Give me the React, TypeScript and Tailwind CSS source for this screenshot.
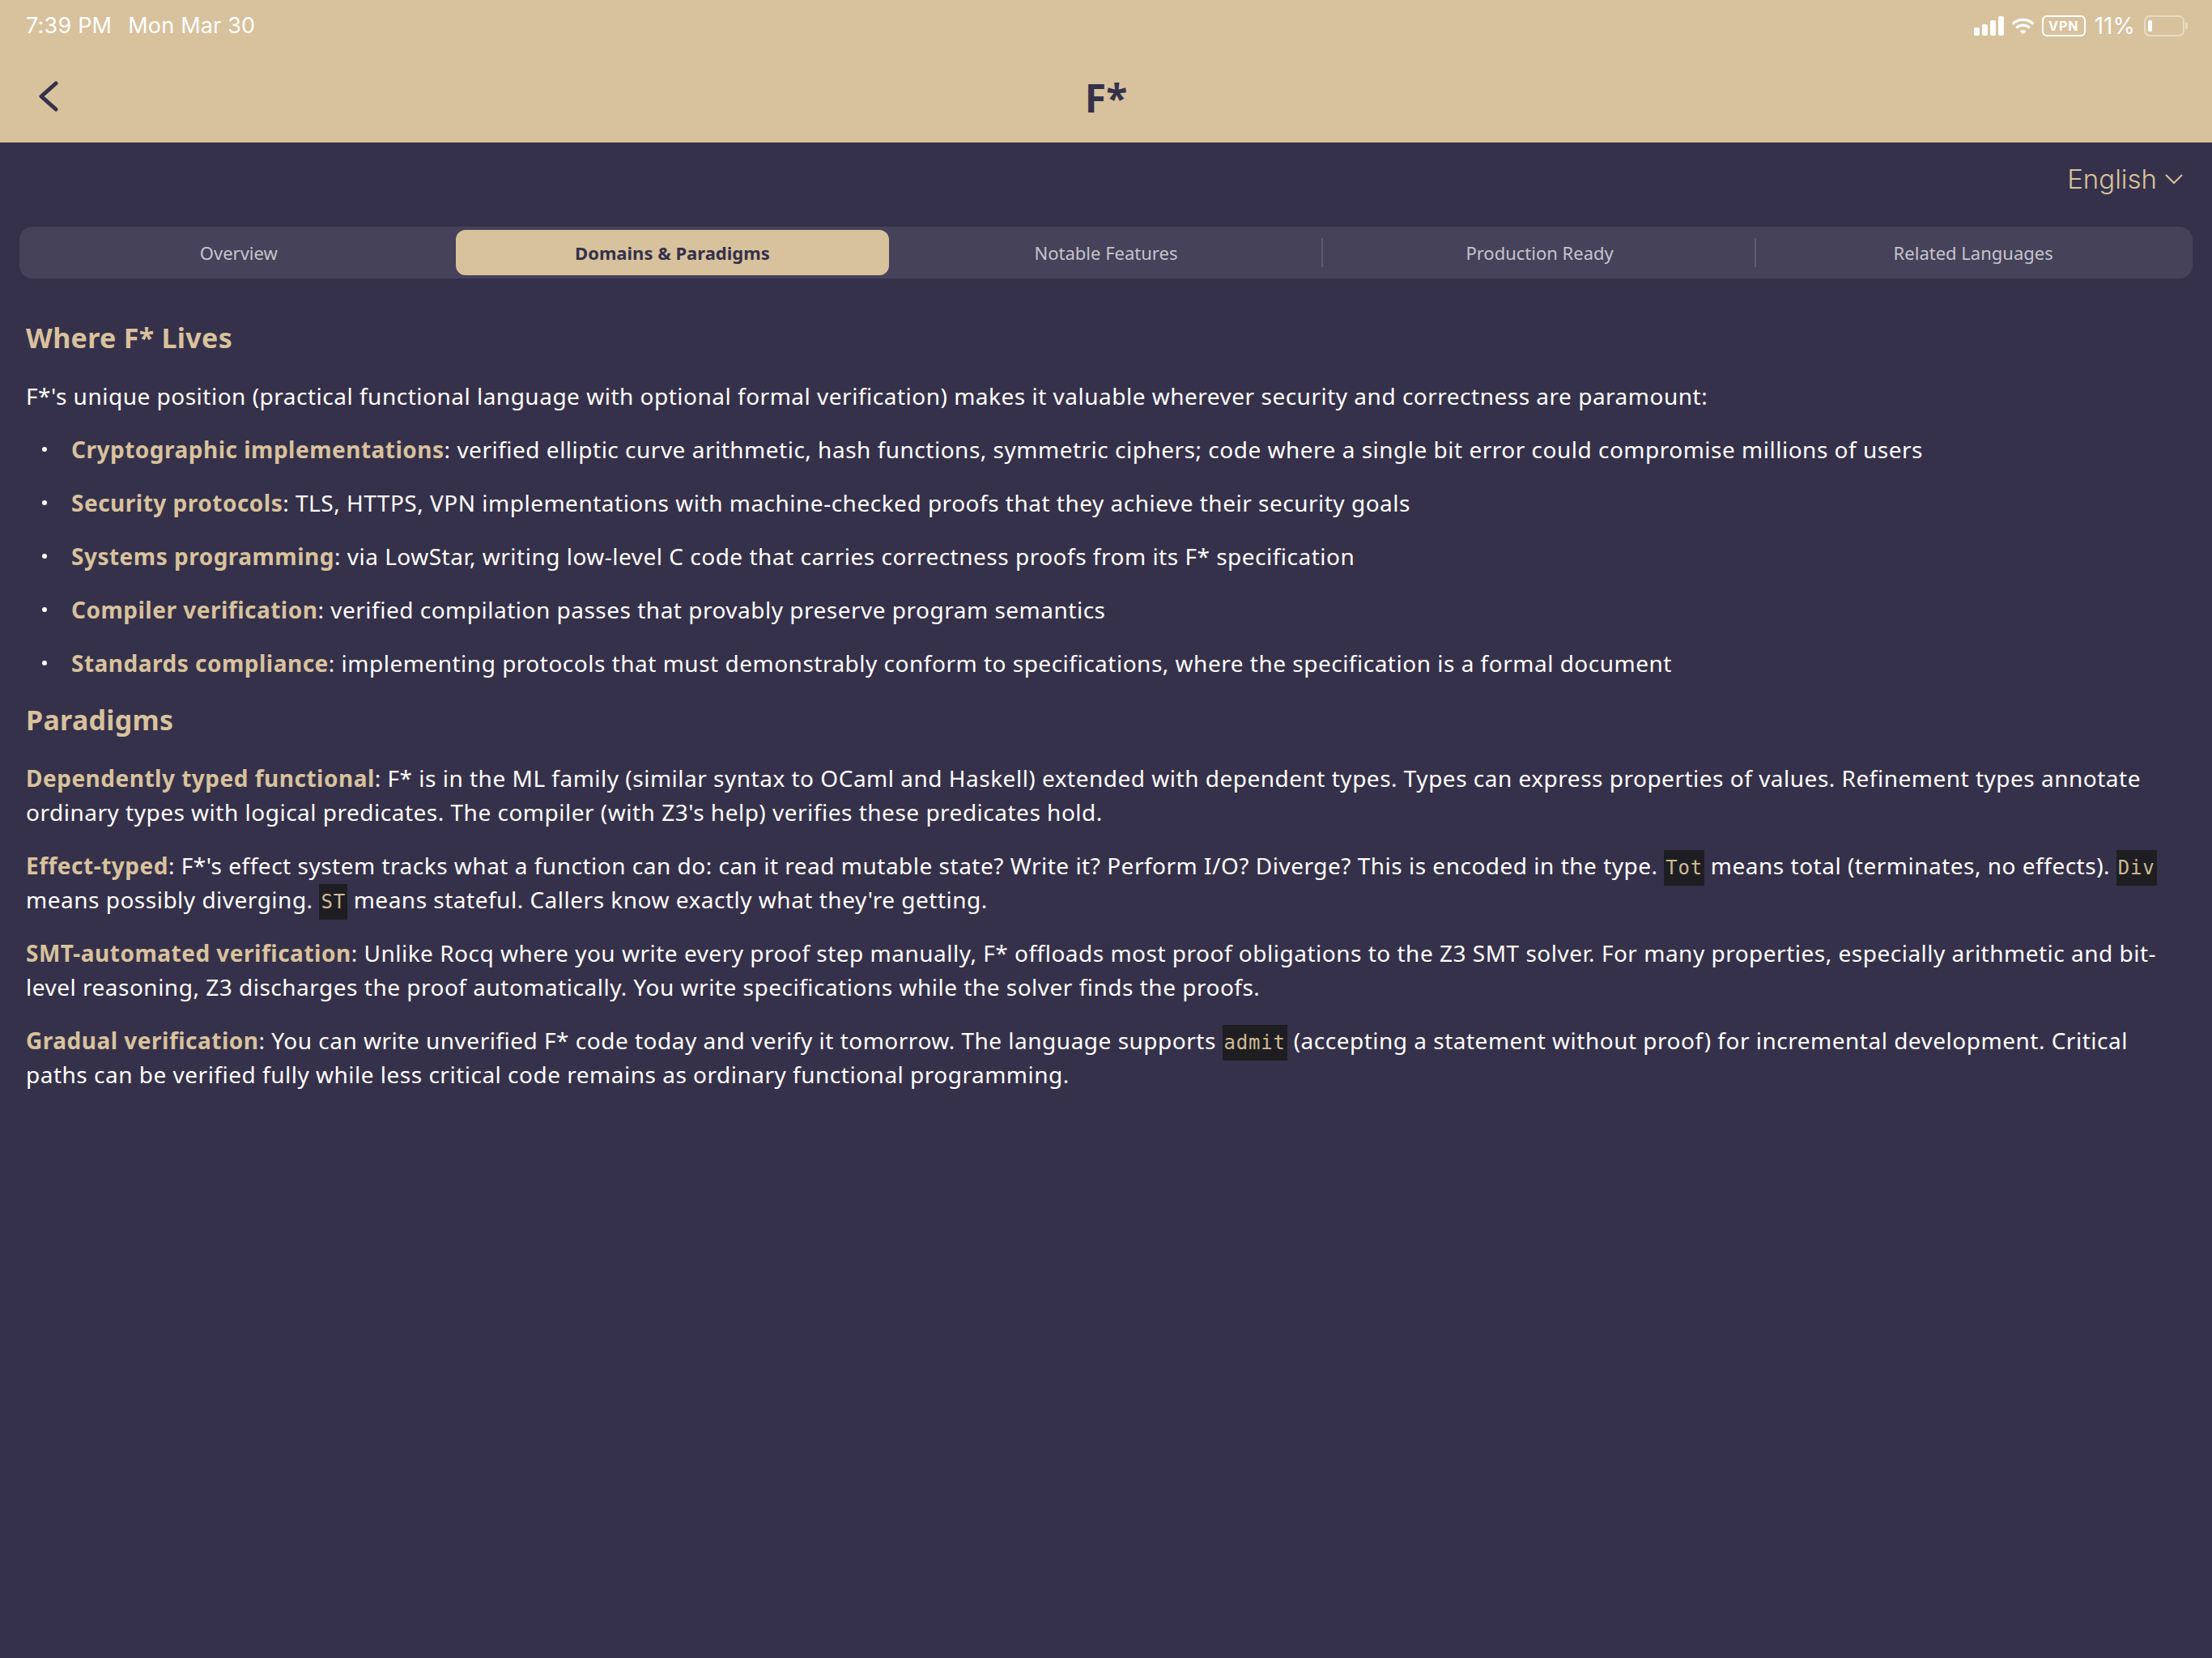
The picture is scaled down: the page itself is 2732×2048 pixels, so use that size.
const tabs = ["Overview", "Domains & Paradigms", "Notable Features", "Production Ready", "Related Languages"];

function B({ children }: { children: React.ReactNode }) {
  return <strong className="font-bold text-[#d8c29d]">{children}</strong>;
}

function C({ children }: { children: React.ReactNode }) {
  return (
    <code className="bg-[#1e1e22] px-[2px] py-[8px] font-['DejaVu_Sans_Mono',monospace] text-[24px] leading-none tracking-[0.8px] text-[#cfba96]">
      {children}
    </code>
  );
}

function StatusBar() {
  return (
    <div className="flex h-[64px] items-center justify-between pl-[32px] pr-[30px] font-['Inter',sans-serif] text-[27px] tracking-normal text-white">
      <div className="flex gap-[20px] tracking-[0.2px]">
        <span>7:39 PM</span>
        <span>Mon Mar 30</span>
      </div>
      <div className="flex items-center">
        <svg width="37" height="24" viewBox="0 0 37 24" fill="white">
          <rect x="0" y="14" width="7" height="10" rx="2" />
          <rect x="10" y="10" width="7" height="14" rx="2" />
          <rect x="20" y="5" width="7" height="19" rx="2" />
          <rect x="30" y="0" width="7" height="24" rx="2" />
        </svg>
        <svg className="ml-[9px]" width="29" height="21" viewBox="0 0 30 22" fill="none" stroke="white" strokeWidth="3.4">
          <path d="M1.5 8 C9 0.5 21 0.5 28.5 8" />
          <path d="M6.5 13 C11 8.5 19 8.5 23.5 13" />
          <path d="M11 17.5 L15 21 L19 17.5 C17 15.5 13 15.5 11 17.5 Z" fill="white" stroke="none" />
        </svg>
        <span className="ml-[9px] flex h-[26px] w-[54px] items-center justify-center rounded-[6px] border-2 border-white text-[16px] font-bold tracking-[1px]">
          VPN
        </span>
        <span className="ml-[11px] text-[28px]">11%</span>
        <span className="ml-[11px] flex items-center">
          <span className="flex h-[26px] w-[50px] items-center rounded-[7px] border-2 border-white/40 pl-[3px]">
            <span className="h-[14px] w-[5px] rounded-[2px] bg-white" />
          </span>
          <span className="ml-[1px] h-[8px] w-[3px] rounded-r-[2px] bg-white/40" />
        </span>
      </div>
    </div>
  );
}

function Header() {
  return (
    <div className="bg-[#d8c29d]">
      <StatusBar />
      <div className="relative flex h-[112px] items-center justify-center pt-[2px]">
        <svg className="absolute left-[47px] top-[36px]" width="26" height="38" viewBox="0 0 26 38" fill="none" stroke="#36314a" strokeWidth="5" strokeLinecap="round" strokeLinejoin="round">
          <path d="M22 3 L4 19 L22 35" />
        </svg>
        <h1 className="text-[48px] font-bold tracking-normal text-[#36314a]">F*</h1>
      </div>
    </div>
  );
}

function Tabs() {
  return (
    <div className="mx-[24px] mt-[24px] flex h-[64px] items-center rounded-[16px] bg-[#45425a] px-[3px] tracking-normal">
      {tabs.map((t, i) => (
        <div key={t} className="relative flex-1">
          <div
            className={
              i === 1
                ? "flex h-[56px] items-center justify-center rounded-[12px] bg-[#d8c29d] text-[22px] font-bold text-[#36314a]"
                : "flex h-[56px] items-center justify-center text-[22px] text-[#c6c4cc]"
            }
          >
            {t}
          </div>
          {i > 2 && <span className="absolute left-[-2px] top-[10px] h-[36px] w-[2px] bg-[#5d5a70]" />}
        </div>
      ))}
    </div>
  );
}

function Bullet({ children }: { children: React.ReactNode }) {
  return (
    <li className="flex h-[66px] items-center">
      <span className="mr-[10px] flex w-[46px] shrink-0 justify-center">
        <span className="h-[6px] w-[6px] rounded-full bg-white" />
      </span>
      <span>{children}</span>
    </li>
  );
}

export default function App() {
  return (
    <div className="min-h-[2048px] bg-[#36314a] font-['Noto_Sans',sans-serif] text-[28px] leading-[42px] tracking-[0.5px] text-white">
      <Header />
      <div className="flex h-[80px] items-center justify-end pt-[10px] pr-[36px]">
        <div className="flex items-center gap-[10px] font-['Inter',sans-serif] text-[33px] font-light tracking-normal text-[#d8c29d]">
          English
          <svg width="22" height="13" viewBox="0 0 22 13" fill="none" stroke="#d8c29d" strokeWidth="2">
            <path d="M1 1 L11 11 L21 1" />
          </svg>
        </div>
      </div>
      <Tabs />
      <div className="px-[32px] pt-[50px]">
        <h2 className="text-[34px] leading-[46px] font-bold tracking-[0.3px] text-[#d8c29d]">Where F* Lives</h2>
        <p className="mt-[28px]">
          F*'s unique position (practical functional language with optional formal verification) makes it valuable wherever security and correctness are paramount:
        </p>
        <ul className="mt-[12px]">
          <Bullet><B>Cryptographic implementations</B>: verified elliptic curve arithmetic, hash functions, symmetric ciphers; code where a single bit error could compromise millions of users</Bullet>
          <Bullet><B>Security protocols</B>: TLS, HTTPS, VPN implementations with machine-checked proofs that they achieve their security goals</Bullet>
          <Bullet><B>Systems programming</B>: via LowStar, writing low-level C code that carries correctness proofs from its F* specification</Bullet>
          <Bullet><B>Compiler verification</B>: verified compilation passes that provably preserve program semantics</Bullet>
          <Bullet><B>Standards compliance</B>: implementing protocols that must demonstrably conform to specifications, where the specification is a formal document</Bullet>
        </ul>
        <h2 className="mt-[14px] text-[34px] leading-[46px] font-bold tracking-[0.3px] text-[#d8c29d]">Paradigms</h2>
        <div className="mt-[28px] flex flex-col gap-[24px]">
          <p><B>Dependently typed functional</B>: F* is in the ML family (similar syntax to OCaml and Haskell) extended with dependent types. Types can express properties of values. Refinement types annotate ordinary types with logical predicates. The compiler (with Z3's help) verifies these predicates hold.</p>
          <p><B>Effect-typed</B>: F*'s effect system tracks what a function can do: can it read mutable state? Write it? Perform I/O? Diverge? This is encoded in the type. <C>Tot</C> means total (terminates, no effects). <C>Div</C> means possibly diverging. <C>ST</C> means stateful. Callers know exactly what they're getting.</p>
          <p><B>SMT-automated verification</B>: Unlike Rocq where you write every proof step manually, F* offloads most proof obligations to the Z3 SMT solver. For many properties, especially arithmetic and bit-level reasoning, Z3 discharges the proof automatically. You write specifications while the solver finds the proofs.</p>
          <p><B>Gradual verification</B>: You can write unverified F* code today and verify it tomorrow. The language supports <C>admit</C> (accepting a statement without proof) for incremental development. Critical paths can be verified fully while less critical code remains as ordinary functional programming.</p>
        </div>
      </div>
    </div>
  );
}
